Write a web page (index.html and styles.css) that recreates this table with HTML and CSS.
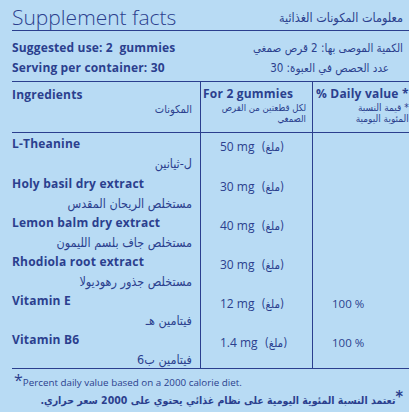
FILE: index.html
```html
<!DOCTYPE html>
<html lang="en">
<head>
<meta charset="utf-8">
<title>Supplement facts</title>
<link rel="stylesheet" href="styles.css">
</head>
<body>
<div class="sheet">
  <header class="top">
    <h1 class="title-en">Supplement facts</h1>
    <h2 class="title-ar" dir="rtl">معلومات المكونات الغذائية</h2>
  </header>

  <section class="serving">
    <div class="serving-en">
      <p>Suggested use: 2&nbsp; gummies</p>
      <p>Serving per container: 30</p>
    </div>
    <div class="serving-ar" dir="rtl">
      <p>الكمية الموصى بها: 2 قرص صمغي</p>
      <p class="shift">عدد الحصص في العبوة: 30</p>
    </div>
  </section>

  <section class="table">
    <div class="cell name head">
      <span class="en">Ingredients</span>
      <span class="ar" dir="rtl">المكونات</span>
    </div>
    <div class="cell amount head">
      <span class="en">For 2 gummies</span>
      <span class="ar small" dir="rtl">لكل قطعتين من القرص<br>الصمغي</span>
    </div>
    <div class="cell dv head">
      <span class="en">% Daily value *</span>
      <span class="ar small" dir="rtl">* قيمة النسبة<br>المئوية اليومية</span>
    </div>

    <div class="cell name first"><span class="en">L-Theanine</span><span class="ar" dir="rtl">ل-ثيانين</span></div>
    <div class="cell amount first"><span class="val">50 mg</span> <span class="unit" dir="rtl">(ملغ)</span></div>
    <div class="cell dv first"></div>

    <div class="cell name"><span class="en">Holy basil dry extract</span><span class="ar" dir="rtl">مستخلص الريحان المقدس</span></div>
    <div class="cell amount"><span class="val">30 mg</span> <span class="unit" dir="rtl">(ملغ)</span></div>
    <div class="cell dv"></div>

    <div class="cell name"><span class="en">Lemon balm dry extract</span><span class="ar" dir="rtl">مستخلص جاف بلسم الليمون</span></div>
    <div class="cell amount"><span class="val">40 mg</span> <span class="unit" dir="rtl">(ملغ)</span></div>
    <div class="cell dv"></div>

    <div class="cell name"><span class="en">Rhodiola root extract</span><span class="ar" dir="rtl">مستخلص جذور رهوديولا</span></div>
    <div class="cell amount"><span class="val">30 mg</span> <span class="unit" dir="rtl">(ملغ)</span></div>
    <div class="cell dv"></div>

    <div class="cell name"><span class="en">Vitamin E</span><span class="ar" dir="rtl">فيتامين هـ</span></div>
    <div class="cell amount"><span class="val">12 mg</span> <span class="unit" dir="rtl">(ملغ)</span></div>
    <div class="cell dv"><span class="val">100 %</span></div>

    <div class="cell name last"><span class="en">Vitamin B6</span><span class="ar" dir="rtl">فيتامين ب6</span></div>
    <div class="cell amount last"><span class="val">1.4 mg</span> <span class="unit" dir="rtl">(ملغ)</span></div>
    <div class="cell dv last"><span class="val">100 %</span></div>
  </section>

  <footer class="notes">
    <p class="note-en"><span class="star">*</span>Percent daily value based on a 2000 calorie diet.</p>
    <p class="note-ar" dir="rtl"><span class="star">*</span>تعتمد النسبة المئوية اليومية على نظام غذائي يحتوي على 2000 سعر حراري.</p>
  </footer>
</div>
</body>
</html>
```

FILE: styles.css
```css
* { box-sizing: border-box; }

html, body {
  margin: 0;
  padding: 0;
  background: #b8dbf4;
}

body {
  color: #2b3f8e;
  font-family: "Open Sans", "DejaVu Sans", sans-serif;
}

p, h1, h2 { margin: 0; font-weight: normal; }

.sheet {
  width: 409px;
  padding-left: 12px;
  overflow: hidden;
}

.ar, .title-ar, .serving-ar, .unit, .note-ar {
  font-family: "DejaVu Sans Condensed", "DejaVu Sans", sans-serif;
  font-stretch: condensed;
}

/* header */
.top {
  display: flex;
  justify-content: space-between;
  align-items: flex-end;
  height: 31px;
  border-bottom: 1.5px solid #2b3f8e;
  padding-right: 6px;
}

.title-en {
  font-size: 21px;
  font-weight: 300;
  line-height: 25px;
  padding-bottom: 0;
}

.title-ar {
  font-size: 12.5px;
  line-height: 18px;
  padding-bottom: 3px;
}

/* serving */
.serving {
  display: flex;
  justify-content: space-between;
  padding: 7px 6px 0 0;
  height: 50px;
}

.serving-en p {
  font-weight: 700;
  font-size: 12px;
  letter-spacing: 0.15px;
  line-height: 20px;
}

.serving-ar p {
  font-size: 11.5px;
  line-height: 20px;
}

.serving-ar .shift { padding-right: 14px; }

/* table */
.table {
  display: grid;
  grid-template-columns: 189px 112px 1fr;
  border-top: 1.5px solid #2b3f8e;
  border-bottom: 1.5px solid #2b3f8e;
}

.cell {
  height: 39px;
}

.cell.name,
.cell.amount {
  border-right: 1px solid #2b3f8e;
}

.cell.head {
  height: 51px;
  border-bottom: 1.5px solid #2b3f8e;
  padding-top: 4px;
}

.cell.first { height: 40px; }

.name {
  display: flex;
  flex-direction: column;
  padding-right: 8px;
}

.name .en {
  font-weight: 700;
  font-size: 12px;
  letter-spacing: 0.2px;
  line-height: 19.5px;
  padding-top: 1px;
}

.name .ar {
  font-size: 12.5px;
  line-height: 19.5px;
  text-align: right;
}

.head .en {
  font-weight: 700;
  font-size: 12px;
  letter-spacing: 0.2px;
  line-height: 16px;
  white-space: nowrap;
}

.head.name .ar { line-height: 14px; font-size: 11px; }

.amount, .dv {
  display: flex;
  flex-direction: column;
}

.amount.head { padding-left: 2px; padding-right: 6px; }
.dv.head { padding-left: 3px; padding-right: 11px; }

.small {
  font-size: 9.5px;
  line-height: 11px;
  text-align: right;
}

.dv .small { font-size: 10px; }

.amount:not(.head) {
  flex-direction: row;
  align-items: flex-start;
  padding-top: 6px;
  padding-left: 19px;
  gap: 7px;
  font-size: 12px;
  line-height: 16px;
}

.dv:not(.head) {
  padding-left: 19px;
  padding-top: 6px;
  font-size: 11.5px;
  line-height: 16px;
}

.unit { font-size: 11.5px; }

/* notes */
.notes {
  padding-top: 5px;
  padding-right: 5px;
}

.note-en {
  font-size: 9.8px;
  line-height: 17px;
}

.note-ar {
  font-size: 10.5px;
  line-height: 18px;
  font-weight: 700;
}

.star {
  font-size: 16px;
  display: inline-block;
  line-height: 10px;
  vertical-align: top;
  margin-top: 1px;
  padding: 0;
}

.note-en .star { padding-left: 2px; }
.note-ar .star { padding-right: 1px; }
```
